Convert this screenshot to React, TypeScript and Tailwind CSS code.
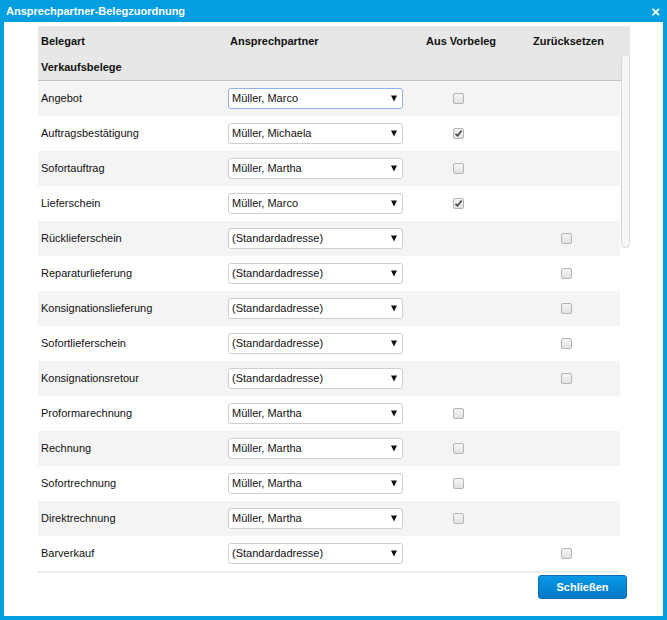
import { useState } from 'react';

type Row = {
    name: string;
    contact: string;
    fromPrev: boolean | null;
    reset: boolean | null;
};

const rows: Row[] = [
    { name: 'Angebot', contact: 'Müller, Marco', fromPrev: false, reset: null },
    { name: 'Auftragsbestätigung', contact: 'Müller, Michaela', fromPrev: true, reset: null },
    { name: 'Sofortauftrag', contact: 'Müller, Martha', fromPrev: false, reset: null },
    { name: 'Lieferschein', contact: 'Müller, Marco', fromPrev: true, reset: null },
    { name: 'Rücklieferschein', contact: '(Standardadresse)', fromPrev: null, reset: false },
    { name: 'Reparaturlieferung', contact: '(Standardadresse)', fromPrev: null, reset: false },
    { name: 'Konsignationslieferung', contact: '(Standardadresse)', fromPrev: null, reset: false },
    { name: 'Sofortlieferschein', contact: '(Standardadresse)', fromPrev: null, reset: false },
    { name: 'Konsignationsretour', contact: '(Standardadresse)', fromPrev: null, reset: false },
    { name: 'Proformarechnung', contact: 'Müller, Martha', fromPrev: false, reset: null },
    { name: 'Rechnung', contact: 'Müller, Martha', fromPrev: false, reset: null },
    { name: 'Sofortrechnung', contact: 'Müller, Martha', fromPrev: false, reset: null },
    { name: 'Direktrechnung', contact: 'Müller, Martha', fromPrev: false, reset: null },
    { name: 'Barverkauf', contact: '(Standardadresse)', fromPrev: null, reset: false },
];

function Checkbox({ checked }: { checked: boolean }) {
    return (
        <div className="w-[11px] h-[11px] rounded-[2px] border border-[#b4b4b4] bg-gradient-to-b from-[#f4f4f4] to-[#e2e2e2] flex items-center justify-center">
            {checked && (
                <svg width="9" height="9" viewBox="0 0 9 9">
                    <path d="M1.5 4.8 L3.6 6.8 L7.6 1.6" fill="none" stroke="#444" strokeWidth="1.6" />
                </svg>
            )}
        </div>
    );
}

function Select({ value, focused }: { value: string; focused?: boolean }) {
    return (
        <div
            className={
                focused
                    ? 'w-[175px] h-[21px] rounded-[3px] border border-[#8fb1ec] bg-white flex items-center justify-between pl-[3px] pr-[5px]'
                    : 'w-[175px] h-[21px] rounded-[3px] border border-[#cfcfcf] bg-white flex items-center justify-between pl-[3px] pr-[5px]'
            }
        >
            <span className="text-[11px] text-[#111]">{value}</span>
            <svg width="6" height="7" viewBox="0 0 6 7">
                <path d="M0 0.5 H6 L3 6.5 Z" fill="#111" />
            </svg>
        </div>
    );
}

export default function App() {
    const [data] = useState<Row[]>(rows);

    return (
        <div
            className="w-[667px] h-[620px] bg-[#019ee0] flex flex-col"
            style={{ fontFamily: '"Liberation Sans", Arial, sans-serif' }}
        >
            <div className="h-[22px] flex items-center justify-between pl-[6px] pr-[7px]">
                <h1 className="text-[11px] font-bold text-white">Ansprechpartner-Belegzuordnung</h1>
                <span className="text-white font-bold text-[15px] leading-none">×</span>
            </div>
            <div className="flex-1 mx-[4px] mb-[4px] bg-white pl-[34px] pt-[4px] relative">
                <div className="w-[592px]">
                    <div className="bg-[#e7e7e7] border-b border-[#c4c4c4] text-[11px] font-bold text-[#111]">
                        <div className="h-[28px] grid grid-cols-[190px_198px_107px_97px] items-center pt-[2px]">
                            <span className="pl-[3px]">Belegart</span>
                            <span className="pl-[2px]">Ansprechpartner</span>
                            <span>Aus Vorbeleg</span>
                            <span>Zurücksetzen</span>
                        </div>
                        <div className="h-[26px] flex items-center pl-[3px]">Verkaufsbelege</div>
                    </div>
                    <div className="w-[582px] border-b-2 border-[#ececec]">
                        {data.map((row, i) => (
                            <div
                                key={row.name}
                                className={
                                    i % 2 === 0
                                        ? 'h-[35px] grid grid-cols-[190px_198px_107px_87px] items-center bg-[#f4f4f4]'
                                        : 'h-[35px] grid grid-cols-[190px_198px_107px_87px] items-center bg-white'
                                }
                            >
                                <span className="pl-[3px] text-[11px] text-[#111]">{row.name}</span>
                                <Select value={row.contact} focused={i === 0} />
                                <div className="pl-[27px]">
                                    {row.fromPrev !== null && <Checkbox checked={row.fromPrev} />}
                                </div>
                                <div className="pl-[28px]">
                                    {row.reset !== null && <Checkbox checked={row.reset} />}
                                </div>
                            </div>
                        ))}
                    </div>
                    <div className="flex justify-end pr-[3px] mt-[2px]">
                        <button className="w-[89px] h-[24px] rounded-[3px] bg-gradient-to-b from-[#0a99e6] to-[#0078c9] border border-[#0a6fb8] text-white font-bold text-[11px]">
                            Schließen
                        </button>
                    </div>
                </div>
                <div className="absolute left-[617px] top-[32px] w-[9px] h-[194px] rounded-[5px] bg-[#f7f7f7] border border-[#d6d6d6]" />
            </div>
        </div>
    );
}
